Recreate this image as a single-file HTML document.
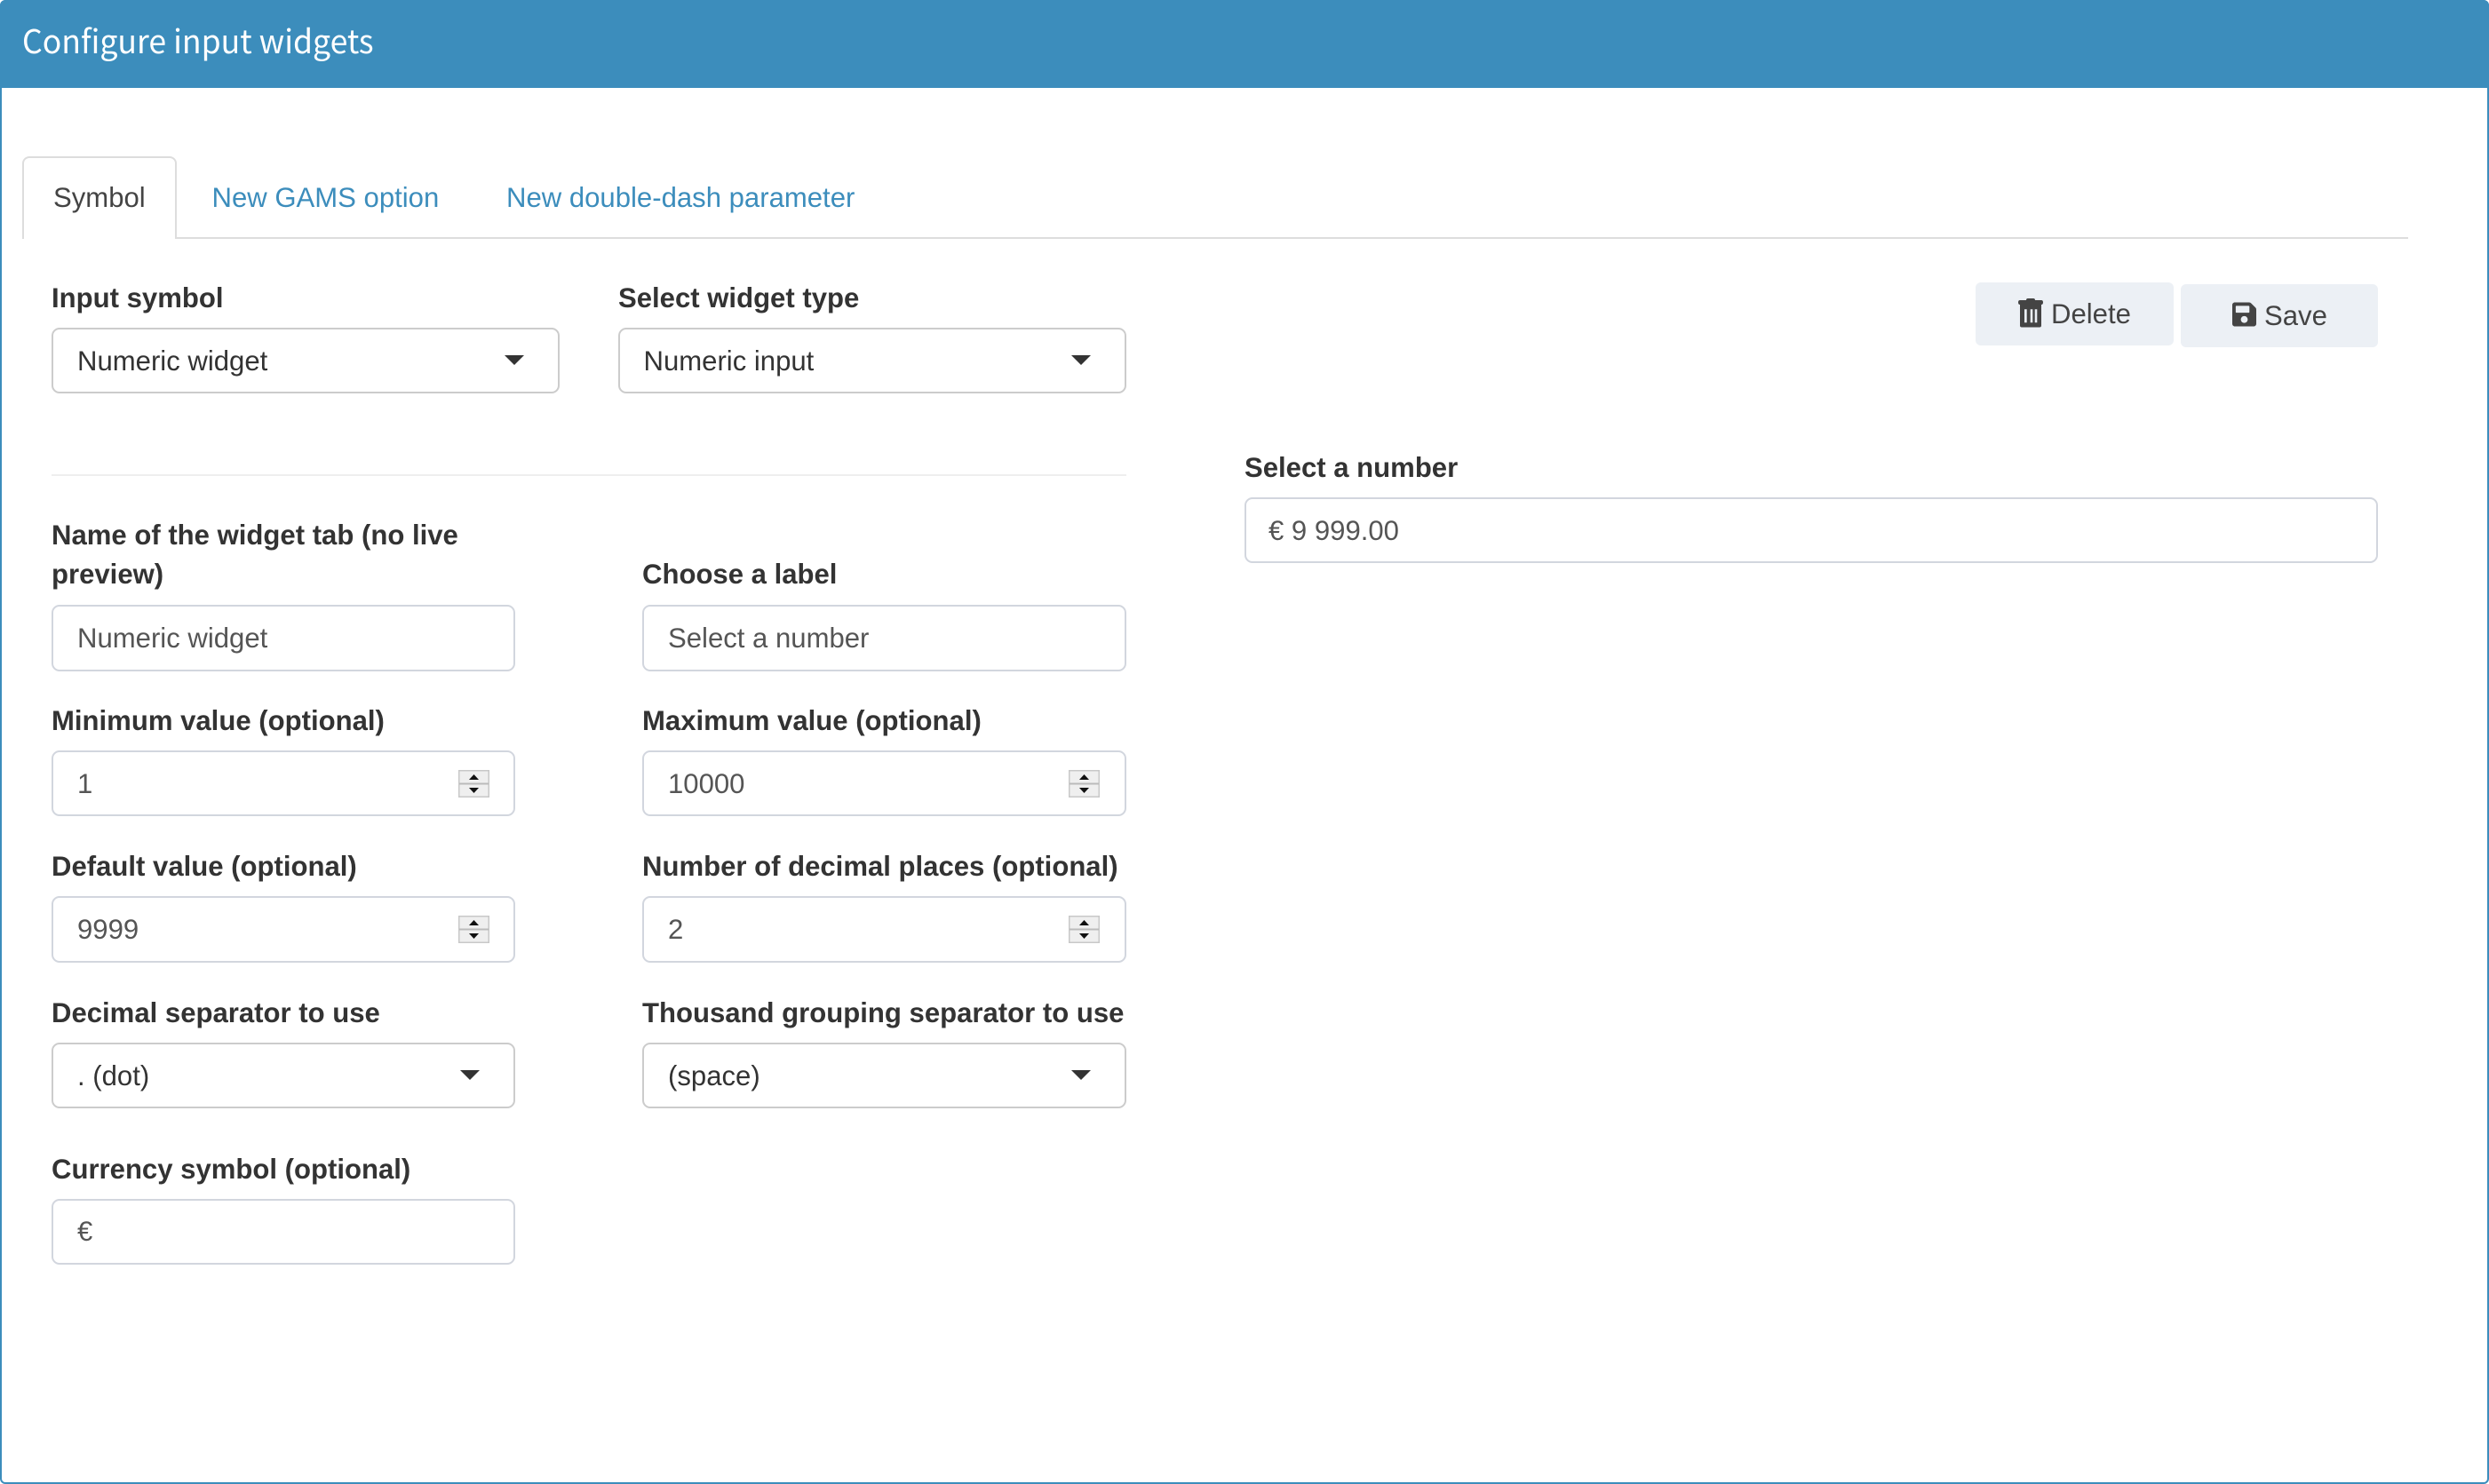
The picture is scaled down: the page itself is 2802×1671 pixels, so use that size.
<!DOCTYPE html>
<html lang="en"><head><meta charset="utf-8"><title>Configure input widgets</title>
<style>
html,body{margin:0;padding:0;background:#fff}
body{position:relative;width:2802px;height:1671px;overflow:hidden;font-family:"Liberation Sans",sans-serif;font-size:31.1px;color:#333}
#frame{position:absolute;left:0;top:0;width:2798px;height:1667px;border:2px solid #3c8dbc;border-radius:6px}
#head{position:absolute;left:0;top:0;width:2802px;height:99px;background:#3c8dbc;border-radius:6px 6px 0 0;overflow:hidden}
#title{position:absolute;left:25px;top:20px;line-height:50px;font-size:36.5px;color:#fff;white-space:nowrap;font-family:"Noto Sans CJK SC","Liberation Sans",sans-serif;font-weight:400;transform:scaleX(.975);transform-origin:0 0}
.t{position:absolute;line-height:40px;white-space:nowrap}
.l{font-weight:700;color:#333}
.v{color:#555}
.s{color:#333}
.a{color:#3c8dbc}
.b{position:absolute;box-sizing:border-box;background:#fff;border:2px solid #d2d6de;border-radius:9px}
.sel{border-color:#ccc}
.c{position:absolute;width:0;height:0;border-left:11px solid transparent;border-right:11px solid transparent;border-top:11px solid #333}
.sp{position:absolute}
#tabline{position:absolute;left:198px;top:267px;width:2513px;height:2px;background:#ddd}
#tab{position:absolute;box-sizing:border-box;left:25px;top:176px;width:174px;height:93px;border:2px solid #ddd;border-bottom:0;border-radius:8px 8px 0 0;background:#fff}
#hr{position:absolute;left:58px;top:534px;width:1210px;height:2px;background:#eee}
.btn{position:absolute;background:#ecf0f5;border-radius:6px}
</style></head><body>
<div id="frame"></div>
<div id="head"><div id="title">Configure input widgets</div></div>

<div id="tabline"></div><div id="tab"></div>
<div class="t s" style="left:60px;top:203px;color:#444">Symbol</div>
<div class="t a" style="left:238.500px;top:203px">New GAMS option</div>
<div class="t a" style="left:570px;top:203px">New double-dash parameter</div>

<div class="t l" style="left:58px;top:316px">Input symbol</div>
<div class="b sel" style="left:58px;top:369px;width:572px;height:74px"></div>
<div class="t s" style="left:87px;top:387px">Numeric widget</div>
<div class="c" style="left:568px;top:400px"></div>

<div class="t l" style="left:696px;top:316px">Select widget type</div>
<div class="b sel" style="left:696px;top:369px;width:572px;height:74px"></div>
<div class="t s" style="left:724.500px;top:387px">Numeric input</div>
<div class="c" style="left:1206px;top:400px"></div>

<div class="btn" style="left:2224px;top:318px;width:223px;height:71px"></div>
<svg class="sp" style="left:2272px;top:336px" width="28" height="33" viewBox="0 0 28 33"><path fill="#444" d="M9 2q0-2 2-2h6q2 0 2 2h7q2 0 2 2.500T26 7H2Q0 7 0 4.500T2 2zM2 7h24v23.500q0 2-2 2H4q-2 0-2-2z"/><path fill="#ecf0f5" d="M7 12.300h2.700v15H7zM13.700 12.300h2.600v15h-2.600zM18.700 12.300h2.600v15h-2.600z"/></svg>
<div class="t" style="left:2309px;top:334px;color:#444">Delete</div>

<div class="btn" style="left:2455px;top:320px;width:222px;height:71px"></div>
<svg class="sp" style="left:2513px;top:340px" width="27" height="28" viewBox="0 0 448 464"><path fill="#444" transform="translate(0 -24)" d="M433.941 129.941l-83.882-83.882A48 48 0 0 0 316.118 32H48C21.490 32 0 53.490 0 80v352c0 26.510 21.490 48 48 48h352c26.510 0 48-21.490 48-48V163.882a48 48 0 0 0-14.059-33.941zM224 416c-35.346 0-64-28.654-64-64 0-35.346 28.654-64 64-64s64 28.654 64 64c0 35.346-28.654 64-64 64zm96-304.520V212c0 6.627-5.373 12-12 12H76c-6.627 0-12-5.373-12-12V108c0-6.627 5.373-12 12-12h228.520c3.183 0 6.235 1.264 8.485 3.515l3.480 3.480A11.996 11.996 0 0 1 320 111.480z"/></svg>
<div class="t" style="left:2549px;top:336px;color:#444">Save</div>

<div class="t l" style="left:1401px;top:507px">Select a number</div>
<div class="b" style="left:1401px;top:560px;width:1276px;height:74px"></div>
<div class="t v" style="left:1428px;top:578px">€ 9 999.00</div>

<div id="hr"></div>

<div class="t l" style="left:58px;top:583px">Name of the widget tab (no live</div>
<div class="t l" style="left:58px;top:627px">preview)</div>
<div class="b" style="left:58px;top:681px;width:522px;height:75px"></div>
<div class="t v" style="left:87px;top:699px">Numeric widget</div>

<div class="t l" style="left:723px;top:627px">Choose a label</div>
<div class="b" style="left:723px;top:681px;width:545px;height:75px"></div>
<div class="t v" style="left:752px;top:699px">Select a number</div>

<div class="t l" style="left:58px;top:792px">Minimum value (optional)</div>
<div class="b" style="left:58px;top:845px;width:522px;height:74px"></div>
<div class="t v" style="left:87px;top:863px">1</div>
<svg class="sp" style="left:516px;top:867px" width="35" height="31" viewBox="0 0 35 31"><rect x=".75" y=".75" width="33.500" height="29.500" fill="#efefef" stroke="#c8c8c8" stroke-width="1.500"/><rect x="1" y="14.500" width="33" height="2" fill="#bbb"/><path d="M17.500 5l5.500 6H12zM17.500 26l5.500-6H12z" fill="#111"/></svg>

<div class="t l" style="left:723px;top:792px">Maximum value (optional)</div>
<div class="b" style="left:723px;top:845px;width:545px;height:74px"></div>
<div class="t v" style="left:752px;top:863px">10000</div>
<svg class="sp" style="left:1203px;top:867px" width="35" height="31" viewBox="0 0 35 31"><rect x=".75" y=".75" width="33.500" height="29.500" fill="#efefef" stroke="#c8c8c8" stroke-width="1.500"/><rect x="1" y="14.500" width="33" height="2" fill="#bbb"/><path d="M17.500 5l5.500 6H12zM17.500 26l5.500-6H12z" fill="#111"/></svg>

<div class="t l" style="left:58px;top:956px">Default value (optional)</div>
<div class="b" style="left:58px;top:1009px;width:522px;height:75px"></div>
<div class="t v" style="left:87px;top:1027px">9999</div>
<svg class="sp" style="left:516px;top:1031px" width="35" height="31" viewBox="0 0 35 31"><rect x=".75" y=".75" width="33.500" height="29.500" fill="#efefef" stroke="#c8c8c8" stroke-width="1.500"/><rect x="1" y="14.500" width="33" height="2" fill="#bbb"/><path d="M17.500 5l5.500 6H12zM17.500 26l5.500-6H12z" fill="#111"/></svg>

<div class="t l" style="left:723px;top:956px">Number of decimal places (optional)</div>
<div class="b" style="left:723px;top:1009px;width:545px;height:75px"></div>
<div class="t v" style="left:752px;top:1027px">2</div>
<svg class="sp" style="left:1203px;top:1031px" width="35" height="31" viewBox="0 0 35 31"><rect x=".75" y=".75" width="33.500" height="29.500" fill="#efefef" stroke="#c8c8c8" stroke-width="1.500"/><rect x="1" y="14.500" width="33" height="2" fill="#bbb"/><path d="M17.500 5l5.500 6H12zM17.500 26l5.500-6H12z" fill="#111"/></svg>

<div class="t l" style="left:58px;top:1121px">Decimal separator to use</div>
<div class="b sel" style="left:58px;top:1174px;width:522px;height:74px"></div>
<div class="t s" style="left:87px;top:1192px">. (dot)</div>
<div class="c" style="left:518px;top:1205px"></div>

<div class="t l" style="left:723px;top:1121px">Thousand grouping separator to use</div>
<div class="b sel" style="left:723px;top:1174px;width:545px;height:74px"></div>
<div class="t s" style="left:752px;top:1192px">(space)</div>
<div class="c" style="left:1206px;top:1205px"></div>

<div class="t l" style="left:58px;top:1297px">Currency symbol (optional)</div>
<div class="b" style="left:58px;top:1350px;width:522px;height:74px"></div>
<div class="t v" style="left:87px;top:1367px">€</div>
</body></html>
